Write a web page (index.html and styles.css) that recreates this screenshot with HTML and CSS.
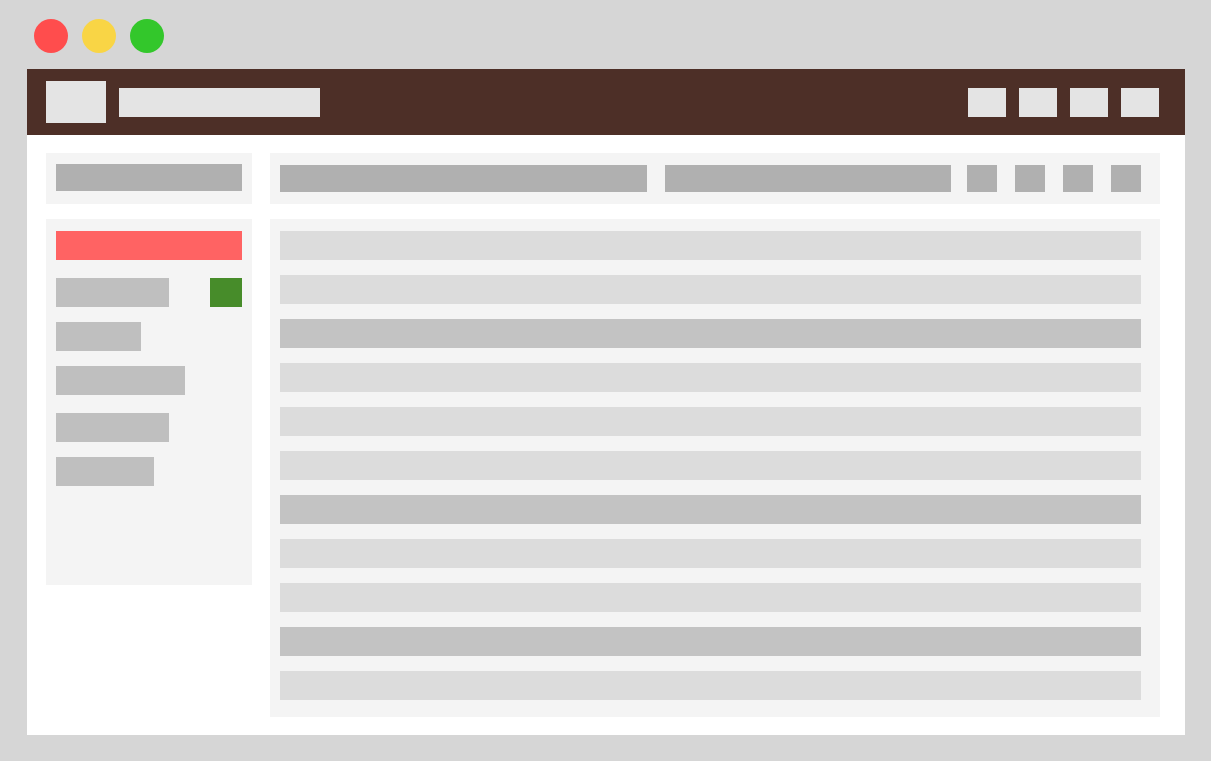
FILE: index.html
```html
<!DOCTYPE html>
<html lang="en">
<head>
<meta charset="utf-8">
<title>Wireframe</title>
<link rel="stylesheet" href="styles.css">
</head>
<body>
<div class="lights">
  <span class="light red"></span>
  <span class="light yellow"></span>
  <span class="light green"></span>
</div>
<div class="window">
  <header class="topbar">
    <div class="logo"></div>
    <div class="title"></div>
    <div class="nav">
      <span class="nav-btn"></span>
      <span class="nav-btn"></span>
      <span class="nav-btn"></span>
      <span class="nav-btn"></span>
    </div>
  </header>
  <main class="content">
    <div class="box side-search"><div class="bar search-bar"></div></div>
    <div class="box toolbar">
      <div class="bar tb-wide"></div>
      <div class="bar tb-mid"></div>
      <div class="bar tb-sq"></div>
      <div class="bar tb-sq"></div>
      <div class="bar tb-sq"></div>
      <div class="bar tb-sq"></div>
    </div>
    <aside class="box sidebar">
      <div class="side-primary"></div>
      <div class="side-row first"><span class="item" style="width:113px"></span><span class="badge"></span></div>
      <div class="side-row"><span class="item" style="width:85px"></span></div>
      <div class="side-row"><span class="item" style="width:129px"></span></div>
      <div class="side-row spaced"><span class="item" style="width:113px"></span></div>
      <div class="side-row"><span class="item" style="width:98px"></span></div>
    </aside>
    <section class="box list">
      <div class="row"></div>
      <div class="row"></div>
      <div class="row dark"></div>
      <div class="row"></div>
      <div class="row"></div>
      <div class="row"></div>
      <div class="row dark"></div>
      <div class="row"></div>
      <div class="row"></div>
      <div class="row dark"></div>
      <div class="row"></div>
    </section>
  </main>
</div>
</body>
</html>
```
FILE: styles.css
```css
* { box-sizing: border-box; }
html, body { margin: 0; padding: 0; }
body {
  background: #d6d6d6;
  font-family: "Liberation Sans", Arial, sans-serif;
  width: 1211px;
  height: 761px;
  overflow: hidden;
}
.lights {
  display: flex;
  gap: 14px;
  padding: 19px 0 0 34px;
  height: 69px;
}
.light {
  width: 34px;
  height: 34px;
  border-radius: 50%;
  display: block;
}
.red { background: #ff4d4d; }
.yellow { background: #f9d545; }
.green { background: #33c72b; }

.window {
  margin-left: 27px;
  width: 1158px;
  height: 666px;
  background: #ffffff;
}
.topbar {
  height: 66px;
  background: #4d2f27;
  display: flex;
  align-items: flex-start;
  padding: 12px 26px 0 19px;
}
.logo {
  width: 60px;
  height: 42px;
  background: #e4e4e4;
}
.title {
  width: 201px;
  height: 29px;
  margin: 7px 0 0 13px;
  background: #e4e4e4;
}
.nav {
  margin-left: auto;
  margin-top: 7px;
  display: flex;
  gap: 13px;
}
.nav-btn {
  display: block;
  width: 38px;
  height: 29px;
  background: #e4e4e4;
}
.content {
  display: grid;
  grid-template-columns: 206px 890px;
  grid-template-rows: 51px auto;
  column-gap: 18px;
  row-gap: 15px;
  padding: 18px 0 0 19px;
  align-items: start;
}
.box { background: #f4f4f4; }
.bar { background: #b0b0b0; height: 27px; }
.side-search { height: 51px; padding: 11px 10px 0; }
.search-bar { width: 186px; }
.toolbar {
  height: 51px;
  display: flex;
  padding: 12px 19px 0 10px;
}
.tb-wide { width: 367px; }
.tb-mid { width: 286px; margin-left: 18px; }
.tb-sq { width: 30px; margin-left: 18px; }
.tb-mid + .tb-sq { margin-left: 16px; }

.sidebar {
  height: 366px;
  padding: 12px 10px 0;
}
.side-primary {
  height: 29px;
  background: #ff6363;
}
.side-row {
  display: flex;
  justify-content: space-between;
  margin-top: 15px;
  height: 29px;
}
.side-row.first { margin-top: 18px; }
.side-row.spaced { margin-top: 18px; }
.item { display: block; height: 29px; background: #bfbfbf; }
.badge { display: block; width: 32px; height: 29px; background: #478c2a; }

.list {
  height: 498px;
  padding: 12px 19px 0 10px;
  display: flex;
  flex-direction: column;
  gap: 15px;
}
.row { height: 29px; background: #dcdcdc; flex: none; }
.row.dark { background: #c3c3c3; }
```
